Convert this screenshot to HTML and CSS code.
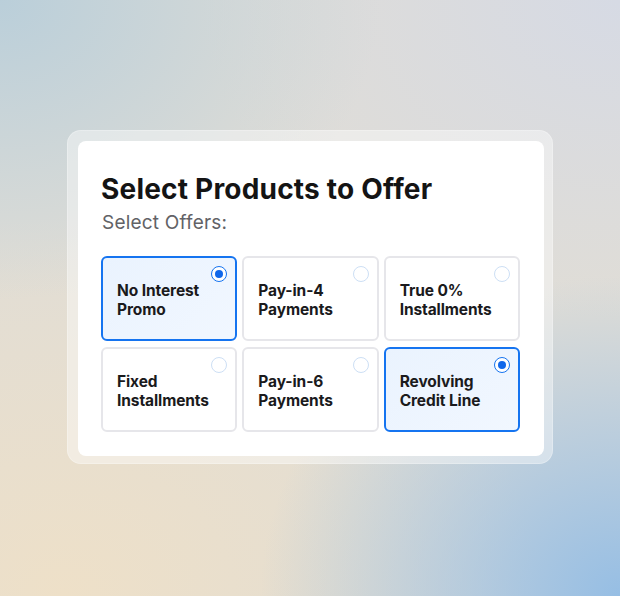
FILE: index.html
```html
<!DOCTYPE html>
<html lang="en">
<head>
<meta charset="utf-8">
<title>Select Products to Offer</title>
<link rel="stylesheet" href="styles.css">
</head>
<body>
<main class="stage">
  <section class="frame">
    <div class="card">
      <h1 class="title">Select Products to Offer</h1>
      <p class="subtitle">Select Offers:</p>
      <div class="grid">
        <div class="tile selected"><span class="radio"></span><span class="label">No Interest<br>Promo</span></div>
        <div class="tile"><span class="radio"></span><span class="label">Pay-in-4<br>Payments</span></div>
        <div class="tile"><span class="radio"></span><span class="label">True 0%<br>Installments</span></div>
        <div class="tile"><span class="radio"></span><span class="label">Fixed<br>Installments</span></div>
        <div class="tile"><span class="radio"></span><span class="label">Pay-in-6<br>Payments</span></div>
        <div class="tile selected"><span class="radio"></span><span class="label">Revolving<br>Credit Line</span></div>
      </div>
    </div>
  </section>
</main>
</body>
</html>
```
FILE: styles.css
```css
html, body {
  margin: 0;
  padding: 0;
}
body {
  width: 620px;
  height: 596px;
  overflow: hidden;
  font-family: Inter, "Noto Sans", "Liberation Sans", sans-serif;
  background:
    radial-gradient(ellipse 380px 300px at 0% 0%, rgba(184, 206, 218, 0.95), rgba(184, 206, 218, 0) 100%),
    radial-gradient(ellipse 360px 320px at 100% 100%, rgba(150, 190, 228, 1), rgba(150, 190, 228, 0) 100%),
    radial-gradient(ellipse 480px 380px at 10% 100%, rgba(238, 224, 200, 1), rgba(238, 224, 200, 0) 100%),
    radial-gradient(ellipse 420px 320px at 100% 0%, rgba(214, 218, 228, 1), rgba(214, 218, 228, 0) 100%),
    #e0ddd6;
}
.stage {
  width: 620px;
  height: 596px;
  display: flex;
  align-items: center;
  justify-content: center;
}
.frame {
  width: 466px;
  padding: 11px 9px 8px 11px;
  border-radius: 14px;
  background: rgba(255, 255, 255, 0.42);
  box-shadow: 0 0 0 1px rgba(255, 255, 255, 0.25) inset;
  margin-top: -2px;
}
.card {
  background: #ffffff;
  border-radius: 8px;
  padding: 31px 24px 24px 23px;
}
.title {
  margin: 0;
  font-size: 28px;
  line-height: 34px;
  font-weight: 750;
  letter-spacing: 0.2px;
  color: #141414;
}
.subtitle {
  margin: 5px 0 0 1px;
  font-size: 19px;
  line-height: 24px;
  font-weight: 400;
  letter-spacing: 0.2px;
  color: #626266;
}
.grid {
  margin-top: 21px;
  display: grid;
  grid-template-columns: repeat(3, 1fr);
  column-gap: 5px;
  row-gap: 6px;
}
.tile {
  position: relative;
  height: 85px;
  box-sizing: border-box;
  border: 2px solid #e6e6ea;
  border-radius: 6px;
  background: #ffffff;
  display: flex;
  align-items: center;
  padding: 3px 14px 0 14px;
}
.tile.selected {
  border-color: #1574f0;
  background: linear-gradient(135deg, #eaf3fe, #f1f7ff);
}
.label {
  font-size: 15.5px;
  line-height: 19px;
  font-weight: 700;
  letter-spacing: -0.1px;
  color: #1a1a1c;
}
.radio {
  position: absolute;
  top: 8px;
  right: 8px;
  width: 16px;
  height: 16px;
  box-sizing: border-box;
  border-radius: 50%;
  border: 1.5px solid #cddff5;
  background: #ffffff;
}
.tile.selected .radio {
  border-color: #1574f0;
}
.tile.selected .radio::after {
  content: "";
  position: absolute;
  left: 50%;
  top: 50%;
  width: 8px;
  height: 8px;
  margin: -4px 0 0 -4px;
  border-radius: 50%;
  background: #1168ea;
}
```
